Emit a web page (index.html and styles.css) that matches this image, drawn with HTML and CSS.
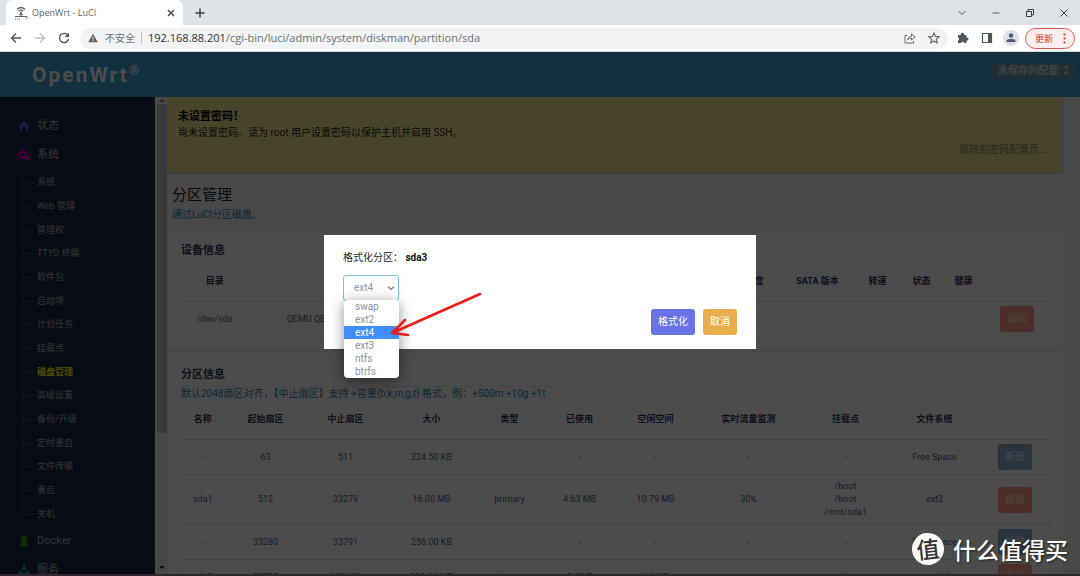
FILE: index.html
```html
<!DOCTYPE html>
<html lang="zh-CN">
<head>
<meta charset="utf-8">
<title>OpenWrt - LuCI</title>
<link rel="stylesheet" href="styles.css">
</head>
<body>
<div class="window">
  <header class="tabstrip">
    <div class="tab">
      <svg class="favicon" viewBox="0 0 14 14" fill="none" stroke="#5f6368"><path d="M3 3.500Q7-.500 11 3.500M4.700 5.300Q7 3 9.300 5.300M7 5.500V9" stroke-width="1.200"/><path d="M5.500 9L7 6.500 8.500 9zM1 10.500h12v2.500" stroke-width="1"/><path d="M1 13h1M3 13h1M5 13h1" stroke-width="1"/></svg>
      <span class="tab-title">OpenWrt - LuCI</span>
      <button class="icon-btn" aria-label="关闭标签页"><svg width="8" height="8" viewBox="0 0 8 8" stroke="#3c4043" stroke-width="1.300"><path d="M1 1l6 6M7 1L1 7"/></svg></button>
    </div>
    <button class="icon-btn new-tab" aria-label="新标签页"><svg width="10" height="10" viewBox="0 0 10 10" stroke="#3c4043" stroke-width="1.500"><path d="M5 .5v9M.5 5h9"/></svg></button>
    <div class="window-controls">
      <button class="icon-btn" aria-label="搜索标签页"><svg width="10" height="10" viewBox="0 0 10 10" fill="none" stroke="#5f6368"><path d="M1.500 3L5 6.500 8.500 3"/></svg></button>
      <button class="icon-btn" aria-label="最小化"><svg width="10" height="10" viewBox="0 0 10 10" stroke="#5f6368"><path d="M1.500 5h7"/></svg></button>
      <button class="icon-btn" aria-label="还原"><svg width="10" height="10" viewBox="0 0 10 10" fill="none" stroke="#3c4043"><path d="M1.500 3.500h5v5h-5zM3 3.500v-2h5.500V7h-2"/></svg></button>
      <button class="icon-btn" aria-label="关闭"><svg width="10" height="10" viewBox="0 0 10 10" stroke="#3c4043"><path d="M1.500 1.500l7 7M8.500 1.500l-7 7"/></svg></button>
    </div>
  </header>

  <div class="toolbar">
    <div class="nav-buttons">
      <button class="icon-btn" aria-label="后退"><svg width="12" height="12" viewBox="0 0 12 12" fill="none" stroke="#4f5357" stroke-width="1.300"><path d="M11 6H1.500M6 1.500L1.500 6 6 10.500"/></svg></button>
      <button class="icon-btn" aria-label="前进"><svg width="12" height="12" viewBox="0 0 12 12" fill="none" stroke="#bdc1c6" stroke-width="1.300"><path d="M1 6h9.500M6 1.500L10.500 6 6 10.500"/></svg></button>
      <button class="icon-btn" aria-label="重新加载"><svg width="12" height="12" viewBox="0 0 12 12" fill="none" stroke="#4f5357" stroke-width="1.400"><path d="M10 3.500A4.600 4.600 0 1 0 10.600 7"/><path d="M11 .800V5H6.800z" fill="#4f5357" stroke="none"/></svg></button>
    </div>
    <div class="address">
      <svg width="10" height="10" viewBox="0 0 10 10"><path d="M5 .800L9.800 9.200H.2z" fill="#5f6368"/><path d="M5 3.800v2.700M5 7.200v1" stroke="#f1f3f4"/></svg>
      <span class="insecure">不安全</span>
      <span class="url"><b>192.168.88.201</b>/cgi-bin/luci/admin/system/diskman/partition/sda</span>
      <button class="icon-btn" aria-label="分享"><svg width="12" height="12" viewBox="0 0 12 12" fill="none" stroke="#6b6f73"><path d="M3.500 3.500H1v7.500h8.500V9"/><path d="M3.500 8Q4 4.200 7.500 4.200V2L11.200 5 7.500 8V6Q5 6 3.500 8z"/></svg></button>
      <button class="icon-btn" aria-label="收藏"><svg width="12" height="12" viewBox="0 0 12 12" fill="none" stroke="#5f6368" stroke-width="1.100"><path d="M6 1l1.500 3.400 3.700.300-2.800 2.500.800 3.700L6 9l-3.200 1.900.800-3.700L.8 4.700l3.700-.3z"/></svg></button>
    </div>
    <button class="icon-btn" aria-label="扩展程序"><svg width="12" height="12" viewBox="0 0 12 12" fill="#50545a"><path d="M1 3h2.800a1.700 1.700 0 1 1 3.200 0H9.500v2.500a1.600 1.600 0 1 1 0 3.100V11H7.200a1.600 1.600 0 0 0-3.100 0H1V8.400a1.500 1.500 0 0 0 0-2.900z"/></svg></button>
    <button class="icon-btn" aria-label="侧边栏"><svg width="12" height="12" viewBox="0 0 12 12"><path d="M1.500 1.500h9v9h-9z" fill="none" stroke="#50545a" stroke-width="1.200"/><path d="M7 1.500h3.500v9H7z" fill="#50545a"/></svg></button>
    <button class="icon-btn avatar" aria-label="个人资料"><svg width="16" height="16" viewBox="0 0 16 16" fill="#4e5d78"><circle cx="8" cy="5.500" r="2.200"/><path d="M3.500 12V10.700Q4 8.700 8 8.700t4.500 2V12z"/></svg></button>
    <button class="update">更新<svg width="3" height="11" viewBox="0 0 3 11" fill="#d93025"><circle cx="1.500" cy="1.500" r="1.100"/><circle cx="1.500" cy="5.500" r="1.100"/><circle cx="1.500" cy="9.500" r="1.100"/></svg></button>
  </div>

  <div class="viewport">
    <div class="topbar">
      <a class="brand" href="#">OpenWrt<sup>®</sup></a>
      <a class="unsaved" href="#">未保存的配置: 2</a>
    </div>
    <div class="columns">
      <nav class="sidebar">
        <a class="menu" href="#"><svg viewBox="0 0 12 12" fill="#5e5ce6"><path d="M6 1.500L10.200 5v5.800H7.700V7.500Q6 5.800 4.300 7.500v3.300H1.800V5z"/></svg>状态</a>
        <a class="menu" href="#"><svg viewBox="0 0 12 12" fill="none" stroke="#e000c8"><circle cx="5" cy="5.500" r="2.900" stroke-width="1.700"/><circle cx="5" cy="5.500" r="4.400" stroke-width="1.600" stroke-dasharray="2 2.600"/><circle cx="10" cy="9" r="1.500" stroke-width="1.300"/><circle cx="10" cy="9" r="2.300" stroke-width=".8" stroke-dasharray="1.200 1.200"/></svg>系统</a>
        <ul class="submenu">
          <li><a href="#">系统</a></li>
          <li><a href="#">Web 管理</a></li>
          <li><a href="#">管理权</a></li>
          <li><a href="#">TTYD 终端</a></li>
          <li><a href="#">软件包</a></li>
          <li><a href="#">启动项</a></li>
          <li><a href="#">计划任务</a></li>
          <li><a href="#">挂载点</a></li>
          <li><a class="active" href="#">磁盘管理</a></li>
          <li><a href="#">高级设置</a></li>
          <li><a href="#">备份/升级</a></li>
          <li><a href="#">定时重启</a></li>
          <li><a href="#">文件传输</a></li>
          <li><a href="#">重启</a></li>
          <li><a href="#">关机</a></li>
        </ul>
        <a class="menu" href="#"><svg viewBox="0 0 12 12" fill="none" stroke="#46b800" stroke-width="1.300"><path d="M2.500 1.300h7M2.500 10.700h7M3.500 1.500v2L6 6l2.500-2.500v-2M3.500 10.500v-2L6 6l2.500 2.500v2M4.500 3.500h3M4.500 9h3"/></svg>Docker</a>
        <a class="menu" href="#"><svg viewBox="0 0 12 12" fill="#2fa4bd"><path d="M5 .500h2V4h2L6 7.200 3 4h2zM.3 7.500h2.900Q4 9.300 6 9.300t2.800-1.800h2.900V11H.3z"/></svg>服务</a>
      </nav>
      <div class="scrollbar"><span class="arrow-up"></span><span class="thumb"></span><span class="arrow-down"></span></div>
      <main class="main">
        <section class="alert">
          <h4>未设置密码！</h4>
          <p>尚未设置密码。请为 root 用户设置密码以保护主机并启用 SSH。</p>
          <a href="#">跳转到密码配置页...</a>
        </section>
        <h2>分区管理</h2>
        <p class="descr">通过LuCI分区磁盘。</p>
        <section class="card">
          <h3>设备信息</h3>
          <table class="devices">
            <colgroup><col class="w72"><col class="w170"><col><col class="w52"><col class="w74"><col class="w46"><col class="w42"><col class="w42"><col class="w66"></colgroup>
            <thead><tr><th>目录</th><th></th><th></th><th>温度</th><th>SATA 版本</th><th>转速</th><th>状态</th><th>健康</th><th></th></tr></thead>
            <tbody><tr><td>/dev/sda</td><td>QEMU QEMU HARDDISK</td><td></td><td></td><td></td><td></td><td></td><td></td><td><button class="btn remove">弹出</button></td></tr></tbody>
          </table>
        </section>
        <section class="card">
          <h3>分区信息</h3>
          <p class="note">默认2048扇区对齐，【中止扇区】支持 +容量{b,k,m,g,t} 格式，例：+500m +10g +1t</p>
          <table class="partitions">
            <colgroup><col class="w48"><col class="w78"><col class="w82"><col class="w90"><col class="w66"><col class="w74"><col class="w78"><col><col class="w86"><col class="w92"><col class="w70"></colgroup>
            <thead><tr><th>名称</th><th>起始扇区</th><th>中止扇区</th><th>大小</th><th>类型</th><th>已使用</th><th>空闲空间</th><th>实时流量监测</th><th>挂载点</th><th>文件系统</th><th></th></tr></thead>
            <tbody>
              <tr><td>-</td><td>63</td><td>511</td><td>224.50 KB</td><td></td><td>-</td><td>-</td><td>-</td><td>-</td><td>Free Space</td><td><button class="btn create">新建</button></td></tr>
              <tr class="tall"><td>sda1</td><td>512</td><td>33279</td><td>16.00 MB</td><td>primary</td><td>4.63 MB</td><td>10.79 MB</td><td>30%</td><td>/boot<br>/boot<br>/mnt/sda1</td><td>ext2</td><td><button class="btn remove">移除</button></td></tr>
              <tr><td>-</td><td>33280</td><td>33791</td><td>256.00 KB</td><td></td><td>-</td><td>-</td><td>-</td><td>-</td><td>Free Space</td><td><button class="btn create">新建</button></td></tr>
              <tr><td>sda2</td><td>33792</td><td>648191</td><td>300.00 MB</td><td>primary</td><td>0.00 B</td><td>0.00 B</td><td>-</td><td>/</td><td>squashfs</td><td><button class="btn remove">移除</button></td></tr>
            </tbody>
          </table>
        </section>
      </main>
    </div>

    <div class="backdrop">
      <form class="dialog" role="dialog" aria-label="格式化分区">
        <label for="fs">格式化分区： <strong>sda3</strong></label>
        <div class="picker">
          <select id="fs"><option>swap</option><option>ext2</option><option selected>ext4</option><option>ext3</option><option>ntfs</option><option>btrfs</option></select>
          <svg class="chevron" viewBox="0 0 8 8" fill="none" stroke="#7a8290" stroke-width="1.200"><path d="M1 2.500l3 3 3-3"/></svg>
          <ul class="options" role="listbox">
            <li role="option">swap</li><li role="option">ext2</li><li role="option" class="chosen" aria-selected="true">ext4</li><li role="option">ext3</li><li role="option">ntfs</li><li role="option">btrfs</li>
          </ul>
          <svg class="pointer" viewBox="0 0 92 46" fill="none" stroke="#e8201c" stroke-width="2.600" stroke-linecap="round" stroke-linejoin="round"><path d="M90 2L2 41M15 28L2 41l16 2"/></svg>
        </div>
        <div class="actions">
          <button type="button" class="btn format">格式化</button>
          <button type="button" class="btn cancel">取消</button>
        </div>
      </form>
    </div>
    <div class="watermark"><span class="seal">值</span><span>什么值得买</span></div>
  </div>
</div>
</body>
</html>
```
FILE: styles.css
```css
* { box-sizing: border-box; }
body { margin: 0; overflow: hidden; font: 9px/13px Roboto, "Noto Sans CJK SC", sans-serif; color: #525f7f; }
a { color: inherit; text-decoration: none; }
button { font: inherit; cursor: pointer; }
h2, h3, h4, p, ul { margin: 0; padding: 0; }
ul { list-style: none; }
.window { display: flex; flex-direction: column; height: 100vh; }

/* browser frame */
.icon-btn { display: inline-flex; align-items: center; justify-content: center; flex: none; padding: 0; border: 0; background: none; }
.tabstrip { display: flex; align-items: center; flex: none; height: 25px; background: #dee1e6; font-family: "Open Sans", "Noto Sans CJK SC", sans-serif; }
.tab { display: flex; align-items: center; gap: 4px; width: 177px; height: 25px; margin-left: 6px; padding: 0 8px; background: #fff; border-radius: 6px 6px 0 0; color: #5f6368; }
.favicon { width: 14px; height: 14px; }
.tab-title { flex: 1; }
.new-tab { margin-left: 12px; }
.window-controls { display: flex; gap: 24px; margin-left: auto; padding-right: 11px; }
.toolbar { display: flex; align-items: center; gap: 12px; flex: none; height: 27px; padding: 0 5px 0 10px; background: #fff; border-bottom: 1px solid #d5dadd; font-family: "Open Sans", "Noto Sans CJK SC", sans-serif; }
.nav-buttons { display: flex; gap: 12px; }
.address { display: flex; align-items: center; flex: 1; gap: 12px; height: 21px; margin: 0 -3px 0 -2px; padding: 0 8px; background: #f1f3f4; border-radius: 11px; color: #6b6f73; font-size: 11px; line-height: 14px; }
.insecure { margin: 0 -6px 0 -5px; padding-right: 6px; border-right: 1px solid #bdc1c6; font-size: 10px; line-height: 12px; }
.url { flex: 1; white-space: nowrap; }
.url b { font-weight: 400; color: #303438; }
.avatar { border-radius: 50%; background: #dde0e6; margin: 0 -6px 0 -2px; }
.update { display: flex; align-items: center; justify-content: space-between; width: 50px; height: 21px; padding: 0 8px 0 9px; border: 1px solid #dc5a52; border-radius: 11px; background: #fceeed; color: #cc342b; }

/* page */
.viewport { position: relative; display: flex; flex-direction: column; flex: 1; min-height: 0; overflow: hidden; background: #f3f3f9; border-bottom: 2px solid #31272c; }
.topbar { display: flex; justify-content: space-between; flex: none; height: 45px; padding: 10px 5px 0 32px; background: #3c9dd5; }
.brand { font-size: 21px; line-height: 26px; font-weight: 700; letter-spacing: 2px; color: #fff; }
.brand sup { font-size: 13px; line-height: 10px; font-weight: 400; letter-spacing: 0; vertical-align: 7px; }
.unsaved { align-self: flex-start; margin-top: 1px; padding: 1px 6px; border-radius: 2px; background: #6299a8; color: #ddd; font-size: 10px; line-height: 14px; font-weight: 700; }
.columns { display: flex; flex: 1; min-height: 0; }
.sidebar { flex: none; width: 155px; padding-top: 14px; overflow: hidden; background: #1b2949; color: #b4b4b4; }
.menu { display: flex; align-items: center; gap: 7px; height: 29px; padding-left: 18px; font-size: 11px; }
.menu svg { width: 12px; height: 12px; overflow: visible; }
.submenu { position: relative; display: grid; grid-auto-rows: 1fr; height: 355px; margin: 2px 0 0 22px; }
.submenu::before { content: ""; position: absolute; left: 0; top: 0; bottom: 11px; border-left: 1px dotted #555d70; }
.submenu li { display: flex; align-items: center; gap: 4px; }
.submenu li::before { content: ""; width: 11px; border-top: 1px dashed #555d70; }
.submenu .active { color: #ff0; font-weight: 700; }
.scrollbar { display: flex; flex-direction: column; align-items: center; flex: none; width: 12px; padding: 2px 0 5px; background: #f1f1f1; border-left: 1px solid #fff; }
.arrow-up, .arrow-down { border: 3px solid transparent; }
.arrow-up { border-top: 0; border-bottom-color: #777; margin-bottom: 2px; }
.arrow-down { border-bottom: 0; border-top-color: #333; margin-top: auto; }
.thumb { width: 10px; height: 70%; background: #c1c1c1; }
.main { flex: 1; min-width: 0; padding: 0 18px 0 1px; overflow: hidden; }
.alert { height: 75px; padding: 12px 15px 0 10px; background: #f0e68c; box-shadow: 0 1px 2px #a8b0bd; color: #32325d; font-size: 10px; line-height: 16px; }
.alert h4 { font-size: 11px; color: #000; }
.alert p { color: #222; }
.alert a { display: block; text-align: right; color: #8c8a66; margin-top: 1px; }
h2 { margin: 12px 0 0 4px; font-size: 15px; line-height: 22px; font-weight: 400; color: #222; }
.descr, .note { color: #2f83bd; font-size: 10px; line-height: 14px; }
.descr { margin: 2px 0 0 4px; }
.card { margin-top: 8px; padding: 13px 11px 10px 10px; background: #fff; }
.card + .card { margin-top: 7px; }
h3 { padding: 0 3px 3px; border-bottom: 1px solid #edeff5; color: #32325d; font-size: 11px; line-height: 16px; }
.note { margin: 0 3px; }
table { width: 100%; margin-top: 6px; border: 1px solid #edeff3; border-collapse: collapse; table-layout: fixed; text-align: center; }
thead tr { height: 32px; }
th { padding: 0 0 8px; color: #32325d; font-weight: 700; white-space: nowrap; }
tbody tr { height: 35px; border-top: 1px solid #e0e3e8; }
tbody tr.tall { height: 50px; }
td { padding: 0; white-space: nowrap; }
.w42 { width: 42px; } .w46 { width: 46px; } .w48 { width: 48px; } .w52 { width: 52px; }
.w66 { width: 66px; } .w70 { width: 70px; } .w72 { width: 72px; }
.w74 { width: 74px; } .w78 { width: 78px; } .w82 { width: 82px; } .w86 { width: 86px; }
.w90 { width: 90px; } .w92 { width: 92px; } .w170 { width: 170px; }
.btn { height: 26px; padding: 0 6px; border: 1px solid transparent; border-radius: 3px; color: #fff; font-size: 10px; line-height: 14px; }
.remove { background: #ff9f85; color: #ffe0d8; }
.create { background: #89aacf; color: #e4eefa; }
table .btn { vertical-align: middle; }

/* dialog */
.backdrop { position: absolute; inset: 0; background: rgba(0, 0, 0, .7); }
.dialog { display: flex; flex-direction: column; width: 40%; margin: 183px auto 0; padding: 15px 19px 14px; background: #fff; color: #222; font-size: 10px; line-height: 16px; }
.dialog strong { color: #111; }
.picker { position: relative; align-self: flex-start; margin-top: 9px; }
select { display: block; width: 56px; height: 26px; padding: 0 10px; appearance: none; border: 1px solid #80c0e2; border-radius: 3px; background: #fff; color: #8898aa; font: 10px/16px Roboto, sans-serif; }
.chevron { position: absolute; top: 9px; right: 4px; width: 8px; height: 8px; }
.options { position: absolute; z-index: 1; top: 25px; left: 1px; width: 55px; overflow: hidden; border-radius: 4px; background: #fff; box-shadow: 0 3px 14px rgba(0, 0, 0, .45); color: #8a909c; line-height: 13px; }
.options li { padding-left: 11px; }
.chosen { background: #3f8efc; color: #fff; }
.pointer { position: absolute; z-index: 2; top: 17px; left: 47px; width: 92px; height: 46px; }
.actions { display: flex; justify-content: flex-end; gap: 8px; margin-top: 8px; }
.format { background: #6772e5; }
.cancel { background: #e9ad4c; }

.watermark { position: absolute; right: 12px; bottom: 9px; display: flex; align-items: center; gap: 9px; color: #fff; font: 500 23px/32px "Noto Sans CJK SC", sans-serif; text-shadow: 1px 1px 2px #222; }
.seal { width: 32px; height: 32px; border-radius: 50%; background: #fff; color: #333; text-align: center; font-size: 23px; line-height: 30px; text-shadow: none; transform: rotate(-6deg); }
```
